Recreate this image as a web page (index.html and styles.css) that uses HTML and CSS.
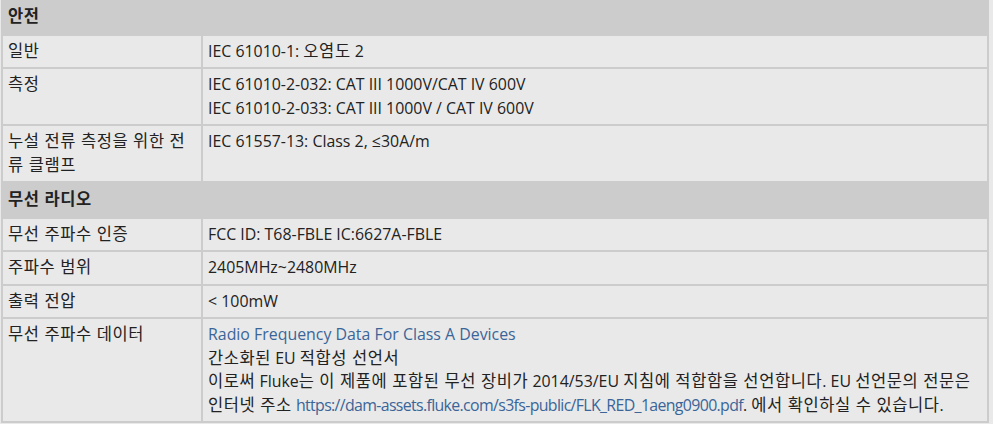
FILE: index.html
```html
<!DOCTYPE html>
<html lang="ko">
<head>
<meta charset="utf-8">
<link rel="stylesheet" href="styles.css">
</head>
<body>
<table class="spec">
  <colgroup><col class="c1"><col class="c2"></colgroup>
  <tr class="sec"><th colspan="2"><span class="ko">안전</span></th></tr>
  <tr><td><span class="ko">일반</span></td><td>IEC 61010-1: <span class="ko">오염도</span> 2</td></tr>
  <tr><td><span class="ko">측정</span></td><td>IEC 61010-2-032: CAT III 1000V/CAT IV 600V<br>IEC 61010-2-033: CAT III 1000V / CAT IV 600V</td></tr>
  <tr><td><span class="ko">누설 전류 측정을 위한 전류 클램프</span></td><td>IEC 61557-13: Class 2, ≤30A/m</td></tr>
  <tr class="sec"><th colspan="2"><span class="ko">무선 라디오</span></th></tr>
  <tr><td><span class="ko">무선 주파수 인증</span></td><td>FCC ID: T68-FBLE IC:6627A-FBLE</td></tr>
  <tr><td><span class="ko">주파수 범위</span></td><td>2405MHz~2480MHz</td></tr>
  <tr><td><span class="ko">출력 전압</span></td><td>&lt; 100mW</td></tr>
  <tr><td><span class="ko">무선 주파수 데이터</span></td><td><a href="#">Radio Frequency Data For Class A Devices</a><br><span class="ko">간소화된</span> EU <span class="ko">적합성 선언서</span><br><span class="ko">이로써</span> Fluke<span class="ko">는 이 제품에 포함된 무선 장비가</span> 2014/53/EU <span class="ko">지침에 적합함을 선언합니다</span>. EU <span class="ko">선언문의 전문은 인터넷 주소</span> <a class="url" href="#">https://dam-assets.fluke.com/s3fs-public/FLK_RED_1aeng0900.pdf</a>. <span class="ko">에서 확인하실 수 있습니다</span>.</td></tr>
</table>
</body>
</html>
```
FILE: styles.css
```css
html, body {
  margin: 0;
  padding: 0;
  background: #e9e9e9;
}
body {
  padding: 0 3px 0 3px;
  font-family: "Open Sans", "Noto Sans CJK KR", sans-serif;
  font-size: 15.9px;
  color: #222;
}
.spec {
  width: 988px;
  border-collapse: separate;
  border-spacing: 2px;
  background: #cccccc;
  table-layout: fixed;
  margin-left: -2px;
  margin-top: -2px;
}
.c1 { width: 198px; }
.spec td {
  background: #e9e9e9;
  padding: 4px 4px 4px 5px;
  line-height: 23.5px;
  vertical-align: top;
  text-align: left;
}
.spec th {
  background: #cccccc;
  text-align: left;
  font-weight: bold;
  padding: 5px 5px;
  line-height: 23.5px;
}
.ko {
  font-size: 16.5px;
  line-height: 18px;
  letter-spacing: 0.6px;
}
.spec a {
  color: #3a6599;
  text-decoration: none;
}
.spec a.url {
  letter-spacing: -0.65px;
}
```
